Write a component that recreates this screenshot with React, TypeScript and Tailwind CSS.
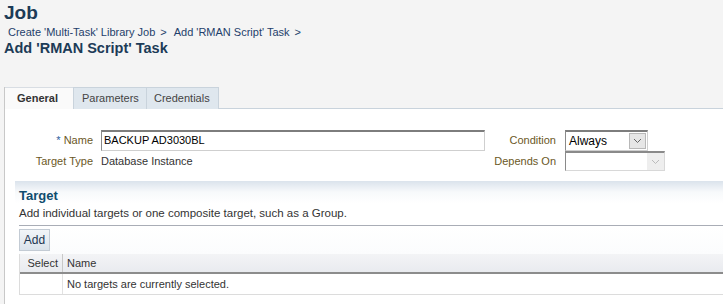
export default function App() {
  return (
    <div
      className="w-[723px] h-[304px] overflow-hidden bg-[#f4f4f4] text-[#333]"
      style={{ fontFamily: "Tahoma, 'Liberation Sans', Arial, sans-serif" }}
    >
      {/* page header */}
      <div className="pl-[4px] pt-[1px]">
        <h1 className="text-[19px] leading-[23px] font-bold text-[#1c3b57]">Job</h1>
        <div className="pl-[4px] mt-[1px] text-[11px] leading-[14px] text-[#1f3f6b] flex gap-[5px]">
          <span>Create 'Multi-Task' Library Job</span>
          <span>&gt;</span>
          <span className="ml-[2px]">Add 'RMAN Script' Task</span>
          <span>&gt;</span>
        </div>
        <h2 className="mt-[1px] text-[14.5px] leading-[17px] font-bold text-[#1c3b57]">
          Add 'RMAN Script' Task
        </h2>
      </div>

      {/* tabbed panel */}
      <div className="mt-[30px] ml-[4px] border-l border-[#c8c8c8] h-[220px]">
        <div className="flex h-[22px] text-[11px]">
          <div className="w-[68px] border-t border-[#d8dde3] bg-[#fafafa] flex items-center pl-[12px] font-bold text-[#333]">
            General
          </div>
          <div className="w-[74px] border border-b-0 border-[#c9d3dc] bg-[#dfe7ee] flex items-center pl-[8px] text-[#444]">
            Parameters
          </div>
          <div className="w-[72px] border border-l-0 border-b-0 border-[#c9d3dc] bg-[#dfe7ee] flex items-center pl-[7px] text-[#444]">
            Credentials
          </div>
          <div className="flex-1 border-b border-[#c9d3dc]" />
        </div>

        <div className="bg-white h-full pt-[20px] text-[11px]">
          {/* form rows */}
          <div className="flex">
            <div className="flex flex-col">
              <div className="flex items-center h-[22px]">
                <label className="w-[88px] text-right text-[#6b5826]">
                  <span className="text-[#2d5fa0]">* </span>Name
                </label>
                <div className="ml-[8px] w-[384px] h-[21px] bg-white border border-[#cfcfcf] border-t-2 border-t-[#7d7d7d] border-l-[#8a8a8a] flex items-center pl-[2px] text-black">
                  BACKUP AD3030BL
                </div>
              </div>
              <div className="flex items-center h-[20px]">
                <label className="w-[88px] text-right text-[#6b5826]">Target Type</label>
                <span className="ml-[8px] text-[#333]">Database Instance</span>
              </div>
            </div>
            <div className="flex flex-col">
              <div className="flex items-center h-[22px]">
                <label className="w-[71px] text-right text-[#6b5826]">Condition</label>
                <div className="ml-[9px] w-[83px] h-[21px] bg-white border border-[#cfcfcf] border-t-2 border-t-[#7d7d7d] border-l-[#8a8a8a] flex items-center text-black">
                  <span className="flex-1 pl-[3px] text-[12px]">Always</span>
                  <span className="w-[17px] h-[16px] mr-[1px] bg-[#e6e6e6] border border-[#b8b8b8] flex items-center justify-center">
                    <svg width="9" height="6" viewBox="0 0 9 6">
                      <path d="M1 1 L4.5 4.5 L8 1" fill="none" stroke="#666" strokeWidth="1" />
                    </svg>
                  </span>
                </div>
              </div>
              <div className="flex items-center h-[20px]">
                <label className="w-[71px] text-right text-[#6b5826]">Depends On</label>
                <div className="ml-[9px] w-[100px] h-[20px] bg-white border border-[#d8d8d8] border-t-2 border-t-[#8a8a8a] border-l-[#8a8a8a] flex items-center justify-end">
                  <span className="w-[17px] h-[17px] bg-[#eeeeee] flex items-center justify-center">
                    <svg width="9" height="6" viewBox="0 0 9 6">
                      <path d="M1 1 L4.5 4.5 L8 1" fill="none" stroke="#bbb" strokeWidth="1" />
                    </svg>
                  </span>
                </div>
              </div>
            </div>
          </div>

          {/* target section */}
          <div className="ml-[10px] mt-[10px] pl-[4px]">
            <div className="bg-gradient-to-b from-[#dbe3ec] via-[#f7f9fb] to-white -ml-[4px] pl-[4px] pt-[7px] h-[22px]">
              <h3 className="text-[13px] leading-[15px] font-bold text-[#0f4c6e]">Target</h3>
            </div>
            <p className="mt-[3px] text-[11.5px] leading-[14px] text-[#333]">
              Add individual targets or one composite target, such as a Group.
            </p>
            <div className="mt-[5px] border-t border-[#a9adb6] bg-gradient-to-b from-white to-[#fbfcfd] pt-[3px] pb-[3px]">
              <button className="h-[22px] w-[31px] border border-[#c3cbd4] bg-gradient-to-b from-[#f2f5f8] to-[#dbe3eb] text-[#1d3550] text-[12px]">
                Add
              </button>
            </div>
            <div className="border-l border-[#dcdcdc]">
              <div className="flex h-[20px] bg-gradient-to-b from-[#f3f4f6] to-[#e9ebef] border-b-2 border-[#8c8c8c] items-center text-[#333]">
                <div className="w-[43px] h-full flex items-center justify-end pr-[4px] border-r border-[#c8c8c8]">
                  Select
                </div>
                <div className="pl-[4px]">Name</div>
              </div>
              <div className="flex h-[21px] items-center border-b border-[#dcdcdc] text-[#333]">
                <div className="w-[43px] h-full border-r border-[#e2e2e2]" />
                <div className="pl-[4px]">No targets are currently selected.</div>
              </div>
            </div>
          </div>
        </div>
      </div>
    </div>
  );
}
